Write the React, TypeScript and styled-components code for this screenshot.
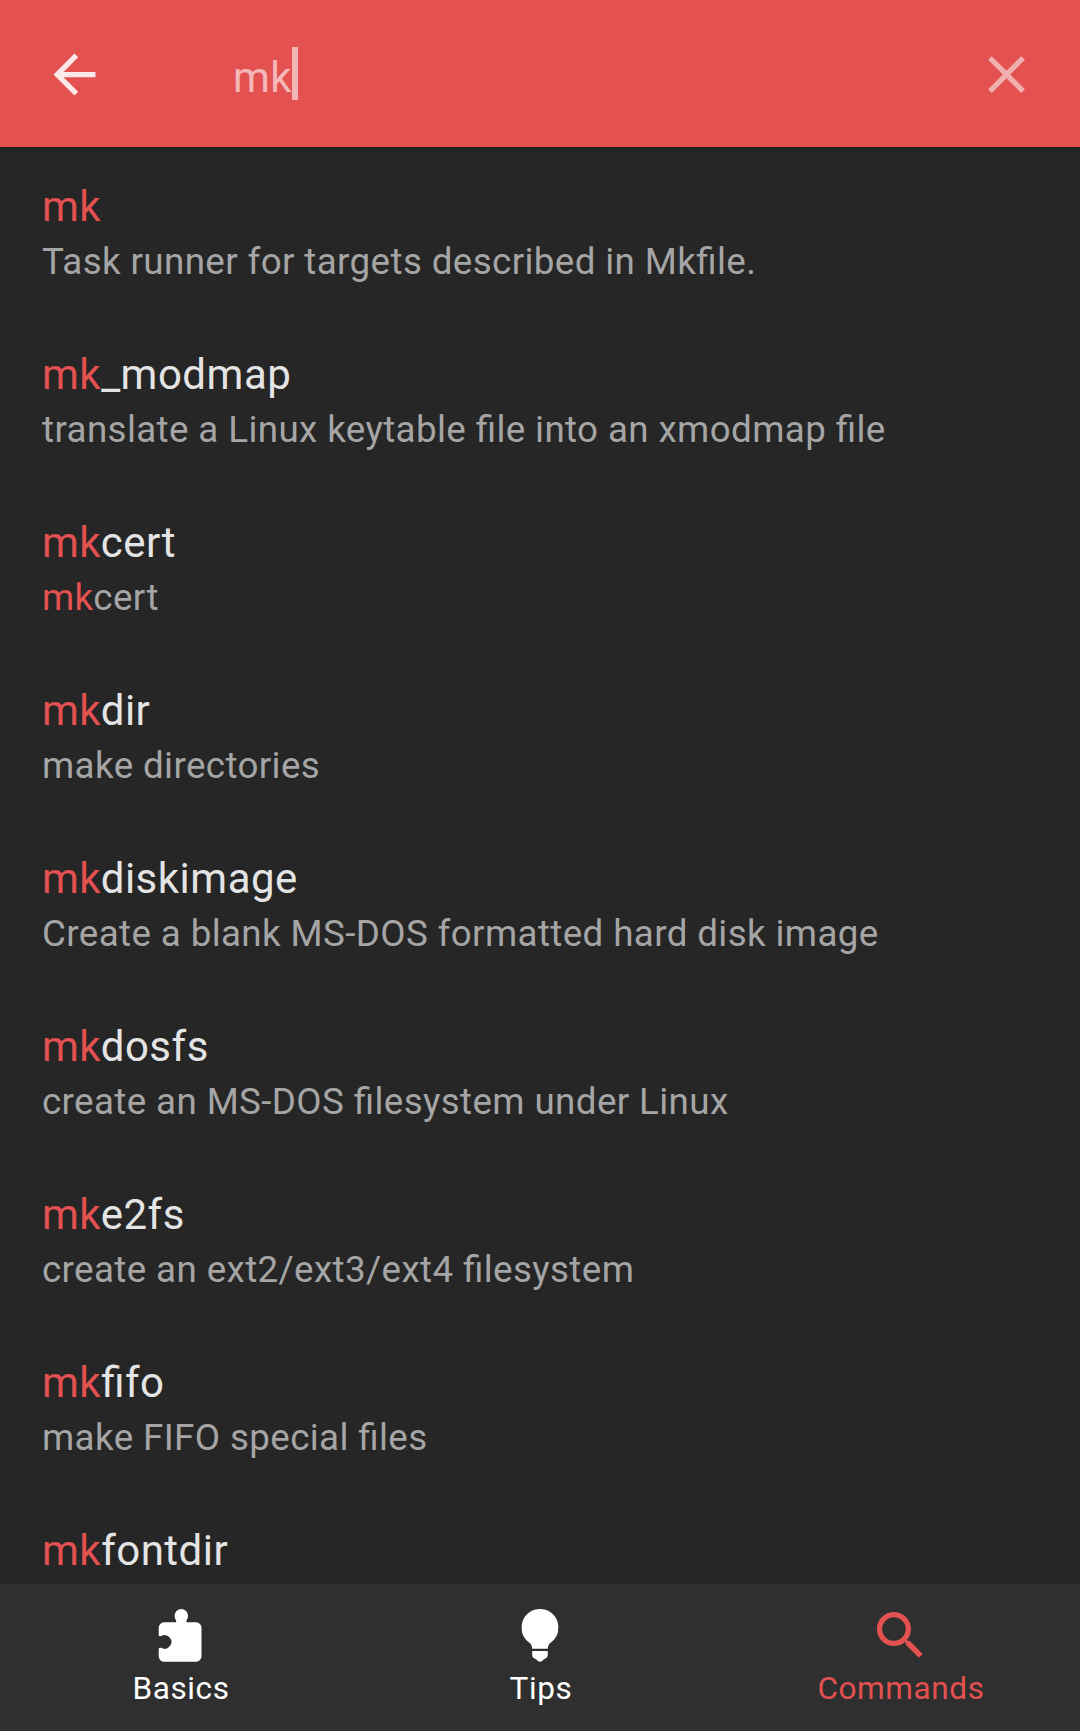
import React from "react";
import styled, { createGlobalStyle } from "styled-components";

const ACCENT = "#e35150";

const GlobalStyle = createGlobalStyle`
  html, body { margin: 0; padding: 0; background: #262626; }
  * { box-sizing: border-box; }
`;

const Screen = styled.div`
  display: flex;
  flex-direction: column;
  width: 1080px;
  height: 1731px;
  overflow: hidden;
  background: #262626;
  font-family: Roboto, "Liberation Sans", sans-serif;
  font-feature-settings: "liga" 1;
`;

const SearchBar = styled.header`
  display: flex;
  flex: none;
  align-items: center;
  height: 147px;
  padding: 2px 42px 0 43px;
  background: ${ACCENT};
  box-shadow: 0 1px 6px rgba(0, 0, 0, 0.3);
  z-index: 1;
`;

const IconButton = styled.button<{ $opacity: number }>`
  display: flex;
  flex: none;
  padding: 0;
  border: 0;
  background: none;
  color: #fff;
  opacity: ${(p) => p.$opacity};
`;

const Query = styled.div`
  display: flex;
  flex: 1;
  align-items: flex-start;
  height: 55px;
  padding-left: 127px;
  color: rgba(255, 255, 255, 0.6);
  font-size: 42px;
  letter-spacing: 0.5px;
`;

const Typed = styled.span`
  padding-top: 4px;
  line-height: 53px;
`;

const Caret = styled.span`
  width: 6px;
  height: 53px;
  background: #f3b6b6;
`;

const Results = styled.ul`
  flex: 1;
  min-height: 0;
  margin: 0;
  padding: 10px 0 0;
  overflow: hidden;
  list-style: none;
`;

const Result = styled.li`
  height: 168px;
  padding: 25px 42px 0;
  white-space: nowrap;
`;

const Name = styled.div`
  color: #e4e4e4;
  font-size: 42px;
  line-height: 49px;
  letter-spacing: 0.5px;
`;

const Summary = styled.div`
  margin-top: 6px;
  color: #a5a5a5;
  font-size: 36.75px;
  line-height: 49px;
  letter-spacing: 0.38px;
`;

const Match = styled.span`
  color: ${ACCENT};
`;

const NavBar = styled.nav`
  display: grid;
  flex: none;
  grid-template-columns: repeat(3, 1fr);
  height: 147px;
  background: #2f2f2f;
  z-index: 1;
`;

const Tab = styled.a<{ $active?: boolean }>`
  display: flex;
  flex-direction: column;
  align-items: center;
  padding-top: 20px;
  color: ${(p) => (p.$active ? ACCENT : "#fff")};
`;

const Label = styled.span`
  margin-top: 3px;
  padding-left: 2px;
  font-size: 31.5px;
  line-height: 38px;
  letter-spacing: 0.6px;
`;

function Glyph({ children }: { children: React.ReactNode }) {
  return (
    <svg width="63" height="63" viewBox="0 0 24 24" fill="currentColor">
      {children}
    </svg>
  );
}

function Highlighted({ text }: { text: string }) {
  return text.startsWith("mk") ? (
    <>
      <Match>mk</Match>
      {text.slice(2)}
    </>
  ) : (
    <>{text}</>
  );
}

const commands = [
  ["mk", "Task runner for targets described in Mkfile."],
  ["mk_modmap", "translate a Linux keytable file into an xmodmap file"],
  ["mkcert", "mkcert"],
  ["mkdir", "make directories"],
  ["mkdiskimage", "Create a blank MS-DOS formatted hard disk image"],
  ["mkdosfs", "create an MS-DOS filesystem under Linux"],
  ["mke2fs", "create an ext2/ext3/ext4 filesystem"],
  ["mkfifo", "make FIFO special files"],
  ["mkfontdir", ""],
];

export default function App() {
  return (
    <Screen>
      <GlobalStyle />
      <SearchBar>
        <IconButton $opacity={0.87} aria-label="Back">
          <Glyph>
            <path d="M20 11H7.83l5.59-5.59L12 4l-8 8 8 8 1.41-1.41L7.83 13H20v-2z" />
          </Glyph>
        </IconButton>
        <Query>
          <Typed>mk</Typed>
          <Caret />
        </Query>
        <IconButton $opacity={0.54} aria-label="Clear">
          <Glyph>
            <path d="M19 6.41L17.59 5 12 10.59 6.41 5 5 6.41 10.59 12 5 17.59 6.41 19 12 13.41 17.59 19 19 17.59 13.41 12z" />
          </Glyph>
        </IconButton>
      </SearchBar>
      <Results>
        {commands.map(([name, summary]) => (
          <Result key={name}>
            <Name>
              <Highlighted text={name} />
            </Name>
            <Summary>
              <Highlighted text={summary} />
            </Summary>
          </Result>
        ))}
      </Results>
      <NavBar>
        <Tab>
          <Glyph>
            <path d="M5.7 6.95H10.2Q10.5 6.95 10.35 6.4Q9.75 5.5 9.75 4.45A2.55 2.55 0 0 1 14.85 4.45Q14.85 5.5 14.25 6.4Q14.1 6.95 14.4 6.95H18A2.1 2.1 0 0 1 20 9.05V19.9A2.1 2.1 0 0 1 18 22H5.8A2.1 2.1 0 0 1 3.7 19.9V17.1Q3.8 16.6 4.6 16.7A2.6 2.6 0 1 0 4.6 12.2Q3.8 12.4 3.7 11.8V9.05A2.1 2.1 0 0 1 5.7 6.95Z" />
          </Glyph>
          <Label>Basics</Label>
        </Tab>
        <Tab>
          <Glyph>
            <path d="M11.8 1.9A7.05 7.05 0 0 0 7.2 14.3Q8.85 15.4 8.85 17.05H14.75Q14.75 15.4 16.4 14.3A7.05 7.05 0 0 0 11.8 1.9ZM8.85 17.9H14.75V19.6Q14.6 20.6 13.3 21Q12.4 22 11.8 22Q11.2 22 10.3 21Q9 20.6 8.85 19.6Z" />
          </Glyph>
          <Label>Tips</Label>
        </Tab>
        <Tab $active>
          <Glyph>
            <path d="M15.5 14h-.79l-.28-.27C15.41 12.59 16 11.11 16 9.5 16 5.91 13.09 3 9.5 3S3 5.91 3 9.5 5.91 16 9.5 16c1.61 0 3.09-.59 4.23-1.57l.27.28v.79l5 4.99L20.49 19l-4.99-5zm-6 0C7.01 14 5 11.99 5 9.5S7.01 5 9.5 5 14 7.01 14 9.5 11.99 14 9.5 14z" />
          </Glyph>
          <Label>Commands</Label>
        </Tab>
      </NavBar>
    </Screen>
  );
}
